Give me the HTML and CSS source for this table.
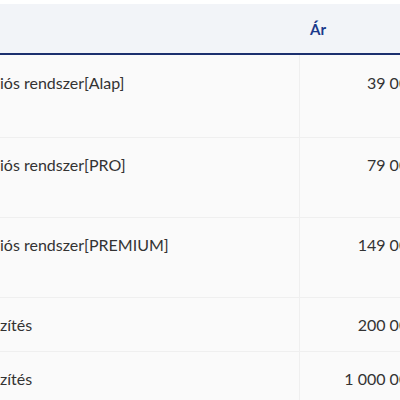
FILE: index.html
```html
<!DOCTYPE html>
<html>

<head>
    <title>Árlista</title>
  <link rel="stylesheet" href="styles.css">
</head>

<body>
    <div class="wrap">
        <table class="prices">
            <colgroup>
                <col class="col-name">
                <col class="col-price">
            </colgroup>
            <tr>
                <th class="name"></th>
                <th class="price">Ár</th>
            </tr>
            <tr class="first">
                <td class="name">iós rendszer[Alap]<div class="note"></div></td>
                <td class="price">39 000 Ft</td>
            </tr>
            <tr>
                <td class="name">iós rendszer[PRO]<div class="note"></div></td>
                <td class="price">79 000 Ft</td>
            </tr>
            <tr>
                <td class="name">iós rendszer[PREMIUM]<div class="note"></div></td>
                <td class="price">149 000 Ft</td>
            </tr>
            <tr>
                <td class="name">zítés</td>
                <td class="price">200 000 Ft</td>
            </tr>
            <tr>
                <td class="name">zítés</td>
                <td class="price">1 000 000 Ft</td>
            </tr>
        </table>
    </div>
</body>

</html>
```

FILE: styles.css
```css
body {
    margin: 0;
    background-color: #ffffff;
    font-family: Lato, "Open Sans", sans-serif;
    overflow: hidden;
}
.wrap {
    padding-top: 4px;
    width: 480px;
}
.prices {
    border-collapse: collapse;
    table-layout: fixed;
    width: 480px;
}
.col-name {
    width: 299px;
}
.col-price {
    width: 181px;
}
.prices th {
    background-color: #f2f4f8;
    color: #1b3a8c;
    font-weight: bold;
    font-size: 15px;
    line-height: 21px;
    text-align: left;
    padding: 15px 10px 13px 11px;
    border-bottom: 2px solid #1b2f6e;
}
.prices td {
    background-color: #fafafa;
    color: #333333;
    font-size: 16px;
    line-height: 21px;
    padding: 16px 10px;
    vertical-align: top;
    border-bottom: 1px solid #efefef;
}
.prices .first td {
    padding-top: 17px;
    padding-bottom: 18px;
}
.prices td.name {
    padding-left: 0;
    border-right: 1px solid #efefef;
}
.prices td.price {
    text-align: right;
    padding-right: 44px;
}
.note {
    height: 26px;
}
```
